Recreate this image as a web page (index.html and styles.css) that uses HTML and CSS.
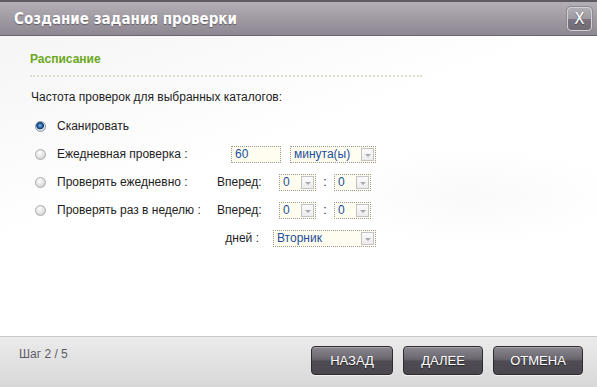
FILE: index.html
```html
<!DOCTYPE html>
<html lang="ru">
<head>
    <meta charset="UTF-8">
    <meta name="viewport" content="width=device-width, initial-scale=1.0">
    <title>Создание задания проверки</title>
    <link rel="stylesheet" href="styles.css">
</head>
<body>

    <div class="dialog">
        <div class="titlebar">
            <h1>Создание задания проверки</h1>
            <button class="close" type="button">X</button>
        </div>

        <div class="content">
            <h2 class="section">Расписание</h2>
            <p class="intro">Частота проверок для выбранных каталогов:</p>

            <div class="options">
                <div class="row">
                    <span class="radio checked"></span>
                    <span class="opt-label">Сканировать</span>
                </div>
                <div class="row">
                    <span class="radio"></span>
                    <span class="opt-label">Ежедневная проверка :</span>
                    <span class="textbox minutes">60</span>
                    <span class="select unit">минута(ы)<i class="arrow"></i></span>
                </div>
                <div class="row">
                    <span class="radio"></span>
                    <span class="opt-label">Проверять ежедневно :</span>
                    <span class="field-label">Вперед:</span>
                    <span class="select small">0<i class="arrow"></i></span>
                    <span class="colon">:</span>
                    <span class="select small">0<i class="arrow"></i></span>
                </div>
                <div class="row">
                    <span class="radio"></span>
                    <span class="opt-label">Проверять раз в неделю :</span>
                    <span class="field-label">Вперед:</span>
                    <span class="select small">0<i class="arrow"></i></span>
                    <span class="colon">:</span>
                    <span class="select small">0<i class="arrow"></i></span>
                </div>
                <div class="row sub">
                    <span class="field-label right">дней :</span>
                    <span class="select day">Вторник<i class="arrow"></i></span>
                </div>
            </div>
        </div>

        <div class="footer">
            <span class="step">Шаг 2 / 5</span>
            <div class="actions">
                <button class="btn back" type="button">НАЗАД</button>
                <button class="btn next" type="button">ДАЛЕЕ</button>
                <button class="btn cancel" type="button">ОТМЕНА</button>
            </div>
        </div>
    </div>

</body>
</html>
```

FILE: styles.css
```css
body {
    margin: 0;
    padding: 0;
    font-family: "Liberation Sans", Arial, sans-serif;
    font-size: 12px;
    color: #1e1e1e;
    background: #ffffff;
}

.dialog {
    width: 597px;
    height: 387px;
    display: flex;
    flex-direction: column;
    box-sizing: border-box;
}

/* title bar */
.titlebar {
    height: 36px;
    box-sizing: border-box;
    border-top: 2px solid #5e5a62;
    border-bottom: 1px solid #6b6670;
    background: linear-gradient(#b4afb6, #a09ba3 50%, #8c8791);
    display: flex;
    align-items: center;
    justify-content: space-between;
    padding: 0 5px 0 14px;
}
.titlebar h1 {
    margin: 0;
    font-family: "DejaVu Sans Condensed", "DejaVu Sans", Verdana, sans-serif;
    font-stretch: condensed;
    font-size: 15px;
    font-weight: bold;
    color: #ffffff;
    text-shadow: 0 1px 1px rgba(60, 55, 65, 0.6);
}
.close {
    width: 25px;
    height: 24px;
    margin-top: 1px;
    border: 1px solid #d4d1d6;
    border-radius: 4px;
    background: linear-gradient(#b1adb4, #9d99a1 50%, #7a7580 51%, #6f6a74);
    color: #ffffff;
    font-family: "DejaVu Sans", sans-serif;
    font-size: 15px;
    line-height: 20px;
    padding: 0;
    box-shadow: 0 0 0 1px #8d8891;
    text-shadow: 0 1px 1px rgba(0, 0, 0, 0.4);
}

/* body */
.content {
    flex: 1;
    padding: 15px 0 0 30px;
    background:
        radial-gradient(ellipse 220px 70px at 470px 160px, rgba(244, 244, 244, 0.5), rgba(255, 255, 255, 0) 70%),
        linear-gradient(160deg, #f5f5f5, #ffffff 40%);
}
.section {
    margin: 0;
    width: 392px;
    font-size: 12px;
    line-height: 16px;
    font-weight: bold;
    color: #6aa81d;
    padding-bottom: 8px;
    border-bottom: 2px dotted #dcdcd3;
}
.intro {
    margin: 12px 0 0 1px;
    line-height: 16px;
}

.options {
    margin-top: 7px;
    padding-left: 5px;
}
.row {
    height: 28px;
    display: flex;
    align-items: center;
}
.radio {
    width: 11px;
    height: 11px;
    box-sizing: border-box;
    border-radius: 50%;
    border: 1px solid #adadad;
    background: radial-gradient(circle at 40% 35%, #ffffff, #e0e0e0 55%, #c4c4c4);
    margin-right: 11px;
    flex-shrink: 0;
}
.radio.checked {
    border-color: #8a97a6;
    background: radial-gradient(circle at 45% 40%, #8cc4ef 0, #235fa6 30%, #123a70 48%, #dfe4ea 56%, #c5cbd2);
}
.opt-label {
    width: 160px;
}
.field-label {
    width: 62px;
}
.field-label.right {
    width: 42px;
    text-align: right;
    margin-right: 14px;
}
.row.sub {
    padding-left: 182px;
}

.textbox,
.select {
    height: 17px;
    box-sizing: border-box;
    border: 1px dotted #9c9a90;
    background: #fffdf0;
    color: #1d4f9c;
    font-size: 12px;
    line-height: 15px;
    padding-left: 3px;
    display: flex;
    align-items: center;
    justify-content: space-between;
}
.minutes {
    width: 50px;
    margin-left: 14px;
}
.unit {
    width: 86px;
    margin-left: 9px;
}
.small {
    width: 37px;
}
.day {
    width: 103px;
}
.colon {
    width: 18px;
    text-align: center;
}
.arrow {
    width: 13px;
    height: 13px;
    box-sizing: border-box;
    margin-right: 1px;
    border: 1px solid #c3c3c3;
    background: linear-gradient(#fbfbfb, #ececec);
    position: relative;
}
.arrow::after {
    content: "";
    position: absolute;
    left: 3px;
    top: 5px;
    border-left: 3px solid transparent;
    border-right: 3px solid transparent;
    border-top: 3px solid #a9a9a9;
}

/* footer */
.footer {
    height: 51px;
    box-sizing: border-box;
    border-top: 1px solid #c9c9c9;
    background: linear-gradient(#ebebeb, #d8d8d8);
    display: flex;
    justify-content: space-between;
    align-items: flex-start;
    padding: 9px 14px 0 19px;
}
.step {
    line-height: 16px;
    color: #5f5b64;
}
.actions {
    display: flex;
    gap: 10px;
}
.btn {
    height: 29px;
    box-sizing: border-box;
    border: 1px solid #2e2c31;
    border-radius: 4px;
    background: linear-gradient(#8a868e, #6b6770 45%, #4e4b53 52%, #4a474f);
    box-shadow: inset 0 1px 0 rgba(255, 255, 255, 0.25), 0 1px 0 rgba(255, 255, 255, 0.6);
    color: #ffffff;
    font-family: "Liberation Sans", Arial, sans-serif;
    font-size: 13px;
    text-shadow: 0 1px 1px rgba(0, 0, 0, 0.5);
    padding: 0;
}
.back {
    width: 82px;
}
.next {
    width: 80px;
}
.cancel {
    width: 90px;
}
```
